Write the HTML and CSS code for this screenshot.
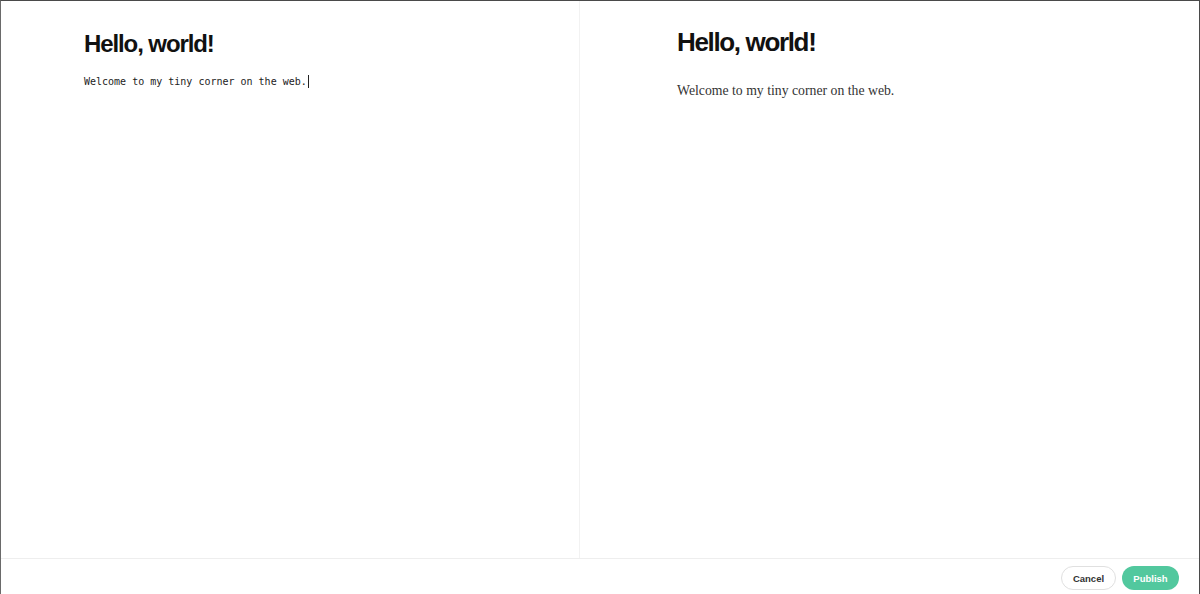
FILE: index.html
```html
<!DOCTYPE html>
<html lang="en">
<head>
    <meta charset="UTF-8">
    <meta name="viewport" content="width=device-width, initial-scale=1.0">
    <title>Editor</title>
    <link rel="stylesheet" href="styles.css">
</head>
<body>
    <div class="app">
        <div class="panes">
            <div class="pane editor">
                <h1 class="title">Hello, world!</h1>
                <p class="source">Welcome to my tiny corner on the web.<span class="caret"></span></p>
            </div>
            <div class="pane preview">
                <h1 class="title">Hello, world!</h1>
                <p class="rendered">Welcome to my tiny corner on the web.</p>
            </div>
        </div>
        <div class="footer">
            <button class="btn btn-cancel">Cancel</button>
            <button class="btn btn-publish">Publish</button>
        </div>
    </div>
</body>
</html>
```

FILE: styles.css
```css
* {
    margin: 0;
    padding: 0;
    box-sizing: border-box;
}

body {
    font-family: "Liberation Sans", Arial, sans-serif;
    background: white;
    color: #111;
}

.app {
    height: 100vh;
    display: flex;
    flex-direction: column;
    border-top: 1px solid #4a4a4a;
    border-left: 1px solid #6a6a6a;
    border-right: 1px solid #4a4a4a;
}

.panes {
    flex: 1;
    display: flex;
}

.pane {
    height: 100%;
}

.editor {
    width: 579px;
    border-right: 1px solid #f2f2f2;
    padding: 31px 0 0 83px;
}

.preview {
    flex: 1;
    padding: 28px 0 0 97px;
}

.title {
    font-weight: bold;
    line-height: 1;
    color: #111;
}

.editor .title {
    font-size: 24px;
    letter-spacing: -1.1px;
}

.preview .title {
    font-size: 26px;
    letter-spacing: -1.35px;
}

.source {
    margin-top: 18px;
    font-family: "DejaVu Sans Mono", "Liberation Mono", monospace;
    font-size: 10px;
    line-height: 16px;
    color: #222;
}

.caret {
    display: inline-block;
    width: 1px;
    height: 13px;
    background: #222;
    vertical-align: -3px;
    margin-left: 1px;
}

.rendered {
    margin-top: 26px;
    font-family: "Liberation Serif", "Times New Roman", serif;
    font-size: 13.75px;
    line-height: 20px;
    color: #333;
}

.footer {
    height: 36px;
    border-top: 1px solid #eeeeee;
    display: flex;
    justify-content: flex-end;
    align-items: flex-start;
    gap: 6px;
    padding: 7px 20px 0 0;
}

.btn {
    height: 24px;
    border-radius: 12px;
    font-family: "Liberation Sans", Arial, sans-serif;
    font-size: 9.5px;
    font-weight: bold;
    cursor: pointer;
}

.btn-cancel {
    width: 55px;
    background: white;
    border: 1px solid #e0e0e0;
    color: #333;
}

.btn-publish {
    width: 57px;
    background: #52c89e;
    border: none;
    color: white;
}
```
